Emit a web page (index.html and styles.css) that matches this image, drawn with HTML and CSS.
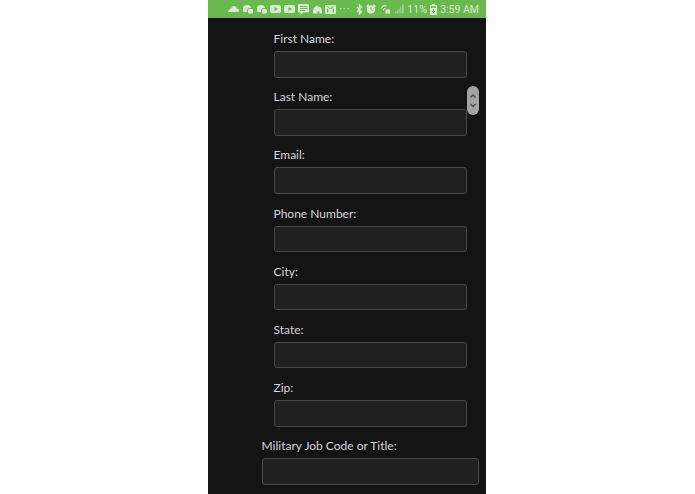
FILE: index.html
```html
<!DOCTYPE html>
<html lang="en">
<head>
    <meta charset="UTF-8">
    <meta name="viewport" content="width=device-width, initial-scale=1.0">
    <title>Profile</title>
    <link rel="stylesheet" href="styles.css">
</head>
<body>
    <div class="screen">
        <div class="status-bar">
            <div class="status-icons">
                <svg class="icon" width="11" height="8" viewBox="0 0 11 8"><path d="M0 6.500C0 5.500.8 5 1.500 5 1.700 3.800 2.500 3.200 3.300 3.200 3.800 1.600 5 1 6 1c1.500 0 2.500 1 2.800 2.400C10 3.400 11 4.200 11 5.500 11 6.600 10.200 7 9.400 7H1C.4 7 0 7 0 6.500z"/></svg>
                <svg class="icon" width="11" height="10" viewBox="0 0 11 10"><path d="M1 4c0-2 1.500-3 4-3s4 1 4 3H7.500C6 4 5 5 5 6.500V8H2.500C1.500 8 1 7.500 1 6.500z"/><rect x="6" y="5" width="5" height="4.500" rx="1"/></svg>
                <svg class="icon" width="11" height="10" viewBox="0 0 11 10"><path d="M1 4c0-2 1.500-3 4-3s4 1 4 3H7.500C6 4 5 5 5 6.500V8H2.500C1.500 8 1 7.500 1 6.500z"/><rect x="6" y="5" width="5" height="4.500" rx="1"/></svg>
                <svg class="icon" width="11" height="8" viewBox="0 0 11 8"><path fill-rule="evenodd" d="M2 0h7a2 2 0 0 1 2 2v4a2 2 0 0 1-2 2H2a2 2 0 0 1-2-2V2a2 2 0 0 1 2-2zM4.500 2v4L8 4z"/></svg>
                <svg class="icon" width="11" height="8" viewBox="0 0 11 8"><path fill-rule="evenodd" d="M2 0h7a2 2 0 0 1 2 2v4a2 2 0 0 1-2 2H2a2 2 0 0 1-2-2V2a2 2 0 0 1 2-2zM4.500 2v4L8 4z"/></svg>
                <svg class="icon chat" width="11" height="11" viewBox="0 0 11 11"><path fill-rule="evenodd" d="M1 0h9a1 1 0 0 1 1 1v6.500a1 1 0 0 1-1 1H5L2.500 11V8.500H1a1 1 0 0 1-1-1V1a1 1 0 0 1 1-1zM2 2v1h7V2zm0 2v1h7V4zm0 2v1h5V6z"/></svg>
                <svg class="icon" width="9" height="9" viewBox="0 0 10 9"><path d="M0 9V6C0 3.500 2 1 4.500 0c.5 1 1.500 1.500 2.500 1.500C9 2 10 4 10 6v3H7V6.500H5V9z"/></svg>
                <svg class="icon" width="11" height="9" viewBox="0 0 11 9"><path fill-rule="evenodd" d="M1 0h9a1 1 0 0 1 1 1v7a1 1 0 0 1-1 1H1a1 1 0 0 1-1-1V1a1 1 0 0 1 1-1zM2 1.500l3.500 3 3.500-3-.8-.3L5.500 3.300 2.800 1.200zM2 7.500h1.200V4.300L2 3.300zm5.800 0H9V3.300L7.800 4.300z"/></svg>
                <span class="dots">···</span>
            </div>
            <div class="status-right">
                <svg class="icon bluetooth" width="7" height="11" viewBox="0 0 7 11"><path d="M1 3l4.500 5L3.300 10V1l2.200 2L1 8" fill="none" stroke-width="1.200"/></svg>
                <svg class="icon alarm" width="10" height="10" viewBox="0 0 11 11"><circle cx="5.500" cy="6" r="4.500"/><path d="M0 2.500 2.500 0l1 1L1 3.500zM11 2.500 8.500 0l-1 1L10 3.500z"/><path class="hand" d="M5.500 3.500V6.300L7.500 7.500" fill="none" stroke-width="1"/></svg>
                <svg class="icon wifi" width="9" height="9" viewBox="0 0 10 10"><path d="M0 3.500C2-.5 5-.5 6.500 1L5.500 2C4 1 2.500 1.500 1 4.200zM2 5.200C3 3.400 4.500 3 5.500 3.700L4.500 4.800c-.5-.2-1 0-1.500 1.200z"/><rect x="5" y="5" width="5" height="4.500" rx="1"/></svg>
                <svg class="icon signal" width="9" height="10" viewBox="0 0 10 10"><path d="M0 8h1v2H0zM2 6.500h1V10H2zM4 5h1v5H4zM6 3h1v7H6zM8 0h1.500v10H8z"/></svg>
                <span class="status-text percent">11%</span>
                <svg class="icon" width="7" height="11" viewBox="0 0 7 11"><path fill-rule="evenodd" d="M2 0h3v1h1a1 1 0 0 1 1 1v8a1 1 0 0 1-1 1H1a1 1 0 0 1-1-1V2a1 1 0 0 1 1-1h1zM1 2.200v1.500h5V2.200zM3 5v2H2v1h1v1h1V8h1V7H4V5z"/></svg>
                <span class="status-text">3:59 AM</span>
            </div>
        </div>

        <form class="profile-form">
            <div class="form-group">
                <label>First Name:</label>
                <input type="text">
            </div>
            <div class="form-group">
                <label>Last Name:</label>
                <input type="text">
            </div>
            <div class="form-group">
                <label>Email:</label>
                <input type="text">
            </div>
            <div class="form-group">
                <label>Phone Number:</label>
                <input type="text">
            </div>
            <div class="form-group">
                <label>City:</label>
                <input type="text">
            </div>
            <div class="form-group">
                <label>State:</label>
                <input type="text">
            </div>
            <div class="form-group">
                <label>Zip:</label>
                <input type="text">
            </div>
            <div class="form-group wide">
                <label>Military Job Code or Title:</label>
                <input type="text">
            </div>
        </form>

        <div class="scroll-handle">
            <svg width="12" height="29" viewBox="0 0 12 29"><path d="M3.500 11.500 6 9l2.500 2.500M3.500 18 6 20.500 8.500 18" fill="none" stroke="#4a4a4a" stroke-width="1.400"/></svg>
        </div>
    </div>
</body>
</html>
```

FILE: styles.css
```css
html, body {
    margin: 0;
    height: 100%;
    background: #fff;
    overflow: hidden;
}
.screen {
    position: relative;
    width: 278px;
    height: 494px;
    margin-left: 208px;
    background: #141414;
    overflow: hidden;
}
.status-bar {
    display: flex;
    align-items: center;
    justify-content: space-between;
    height: 18px;
    padding: 0 7px 0 20px;
    background: #6ab94e;
    color: #d6ebcf;
    font-family: "Roboto", sans-serif;
    font-size: 10.500px;
}
.status-icons, .status-right {
    display: flex;
    align-items: center;
}
.status-icons {
    gap: 3px;
}
.status-right {
    gap: 3px;
}
.icon {
    display: block;
    fill: #d6ebcf;
    stroke: none;
}
.bluetooth {
    stroke: #d6ebcf;
}
.alarm .hand {
    stroke: #6ab94e;
}
.alarm {
    margin-right: 2px;
}
.wifi {
    margin-right: 2px;
}
.chat {
    margin-right: 1px;
}
.signal {
    opacity: 0.6;
}
.dots {
    width: 11px;
    font-size: 12px;
    line-height: 1;
    letter-spacing: 0.5px;
    opacity: 0.8;
}
.status-text {
    white-space: nowrap;
}
.percent {
    letter-spacing: 0.1px;
}
.profile-form {
    display: flex;
    flex-direction: column;
    align-items: center;
    gap: 10.700px;
    padding: 12px 0 0 46px;
}
.form-group {
    display: flex;
    flex-direction: column;
    width: 193px;
}
.form-group.wide {
    width: 217px;
}
label {
    height: 21px;
    color: #d4d4da;
    font-family: "Lato", sans-serif;
    font-size: 12px;
    line-height: 17px;
}
input {
    box-sizing: border-box;
    width: 100%;
    height: 26.500px;
    margin: 0;
    padding: 0 8px;
    background: #202020;
    border: 1px solid #484848;
    border-radius: 3px;
}
.scroll-handle {
    position: absolute;
    top: 86px;
    left: 259px;
    width: 12px;
    height: 29px;
    border-radius: 6px;
    background: #a3a3a3;
}
.scroll-handle svg {
    display: block;
}
```
